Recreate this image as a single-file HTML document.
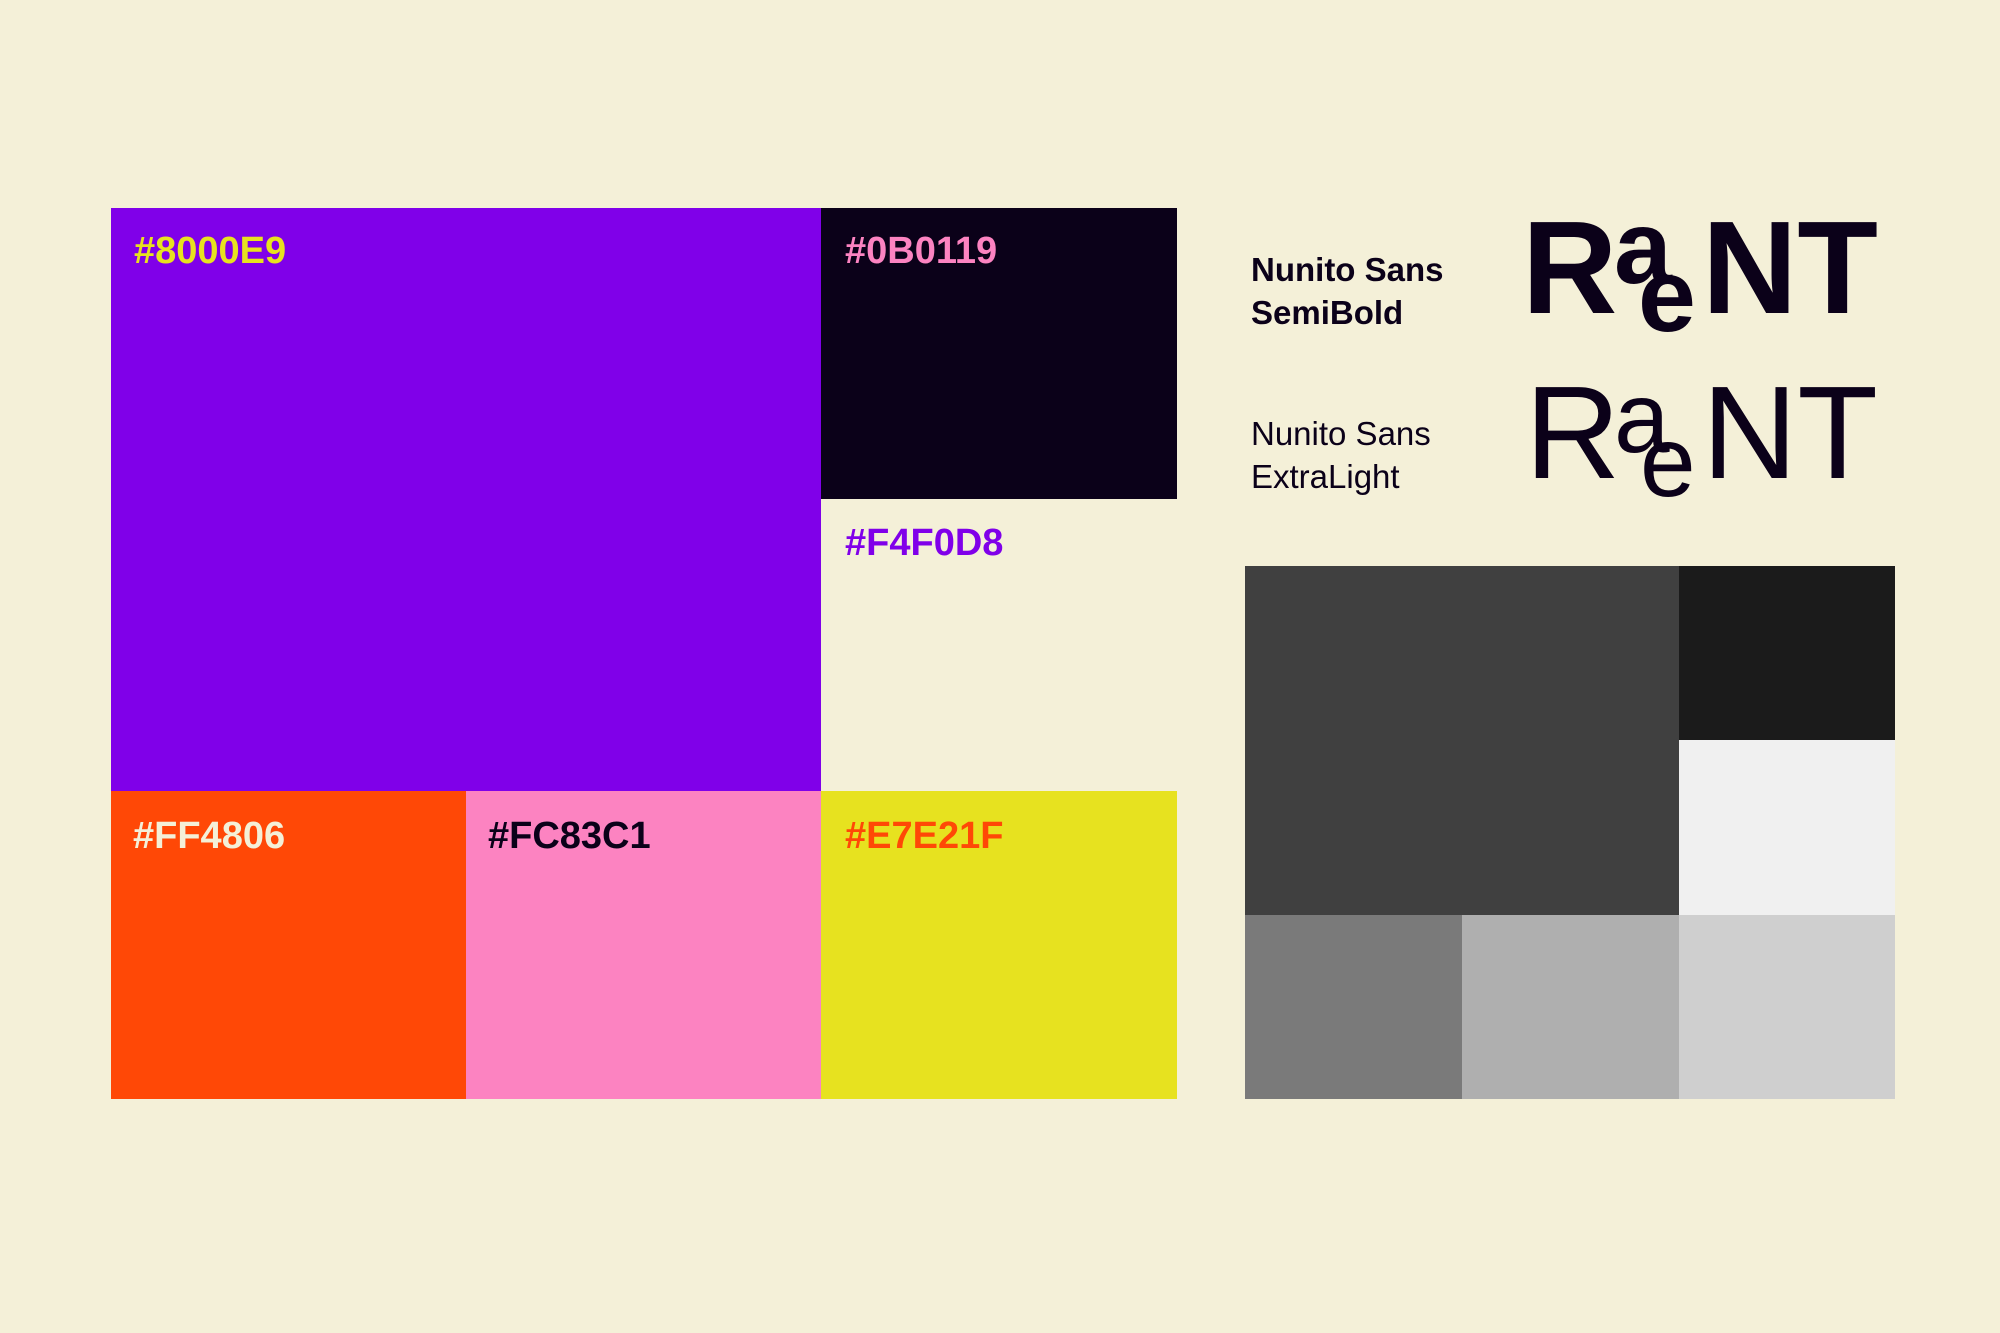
<!DOCTYPE html>
<html><head><meta charset="utf-8"><style>
*{margin:0;padding:0}
body{width:2000px;height:1333px;background:#F4F0D8;position:relative;overflow:hidden;font-family:"Liberation Sans",sans-serif}
div{position:absolute}
.l{font-weight:bold;font-size:38px;line-height:1}
.t{font-size:33px;color:#0B0119;line-height:43px}
.g{color:#0B0119;line-height:1}
</style></head><body>
<div style="left:111px;top:208px;width:710px;height:583px;background:#8000E9"></div>
<div style="left:821px;top:208px;width:356px;height:291px;background:#0B0119"></div>
<div style="left:111px;top:791px;width:355px;height:308px;background:#FF4806"></div>
<div style="left:466px;top:791px;width:355px;height:308px;background:#FC83C1"></div>
<div style="left:821px;top:791px;width:356px;height:308px;background:#E7E21F"></div>

<div class="l" style="left:134px;top:232px;color:#E7E21F">#8000E9</div>
<div class="l" style="left:845px;top:232px;color:#FC83C1">#0B0119</div>
<div class="l" style="left:845px;top:524px;color:#8000E9">#F4F0D8</div>
<div class="l" style="left:133px;top:817px;color:#F4F0D8">#FF4806</div>
<div class="l" style="left:488px;top:817px;color:#0B0119">#FC83C1</div>
<div class="l" style="left:845px;top:817px;color:#FF4806">#E7E21F</div>

<div class="t" style="left:1251px;top:248px;font-weight:bold">Nunito Sans<br>SemiBold</div>
<div class="t" style="left:1251px;top:412px">Nunito Sans<br>ExtraLight</div>

<div class="g" style="left:1522px;top:202px;font-size:132px;font-weight:bold">R</div>
<div class="g" style="left:1614px;top:196px;font-size:104px;font-weight:bold">a</div>
<div class="g" style="left:1638px;top:244px;font-size:104px;font-weight:bold">e</div>
<div class="g" style="left:1702px;top:202px;font-size:132px;font-weight:bold">NT</div>

<div class="g" style="left:1525px;top:367px;font-size:132px">R</div>
<div class="g" style="left:1614px;top:368px;font-size:100px">a</div>
<div class="g" style="left:1640px;top:412px;font-size:100px">e</div>
<div class="g" style="left:1702px;top:367px;font-size:132px">NT</div>

<div style="left:1245px;top:566px;width:434px;height:349px;background:#404040"></div>
<div style="left:1679px;top:566px;width:216px;height:174px;background:#1b1b1b"></div>
<div style="left:1679px;top:740px;width:216px;height:175px;background:#f0f0f0"></div>
<div style="left:1245px;top:915px;width:217px;height:184px;background:#7a7a7a"></div>
<div style="left:1462px;top:915px;width:217px;height:184px;background:#afafaf"></div>
<div style="left:1679px;top:915px;width:216px;height:184px;background:#cfcfcf"></div>
</body></html>
